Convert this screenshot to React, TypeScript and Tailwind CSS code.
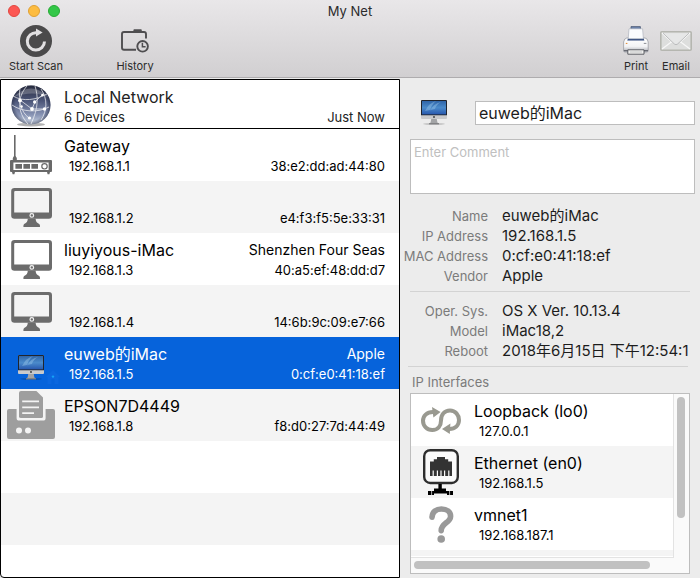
import { useState } from "react";
import type { ReactNode } from "react";
import clsx from "clsx";

type Device = {
  name: string;
  ip: string;
  vendor: string;
  mac: string;
  icon: ReactNode;
};

function ScanIcon() {
  return (
    <svg width="32" height="32" viewBox="0 0 32 32" aria-hidden>
      <circle cx="16" cy="16" r="16" fill="#4b4a4b" />
      <path d="M24.5 16.5 A8.6 8.6 0 1 1 16.5 7.8" fill="none" stroke="#e2e0e2" strokeWidth="3" />
      <path d="M16 3.6 L22.6 7.4 L16 11.6 Z" fill="#e2e0e2" />
    </svg>
  );
}

function HistoryIcon() {
  return (
    <svg width="28" height="24" viewBox="0 0 28 24" fill="none" stroke="#4f4e50" aria-hidden>
      <path d="M15 20.8 H3 Q1 20.8 1 18.8 V5 Q1 3 3 3 H23 Q25 3 25 5 V9.5" strokeWidth="1.9" />
      <path d="M11.6 4 L12.8 0.2 H20.4 L21.6 4 Z" fill="#4f4e50" stroke="none" />
      <circle cx="21.6" cy="17.3" r="5.3" strokeWidth="1.9" />
      <path d="M21.4 13.8 V17.8 H24.6" strokeWidth="1.5" />
    </svg>
  );
}

function PrintIcon() {
  return (
    <svg width="28" height="30" viewBox="0 0 28 30" aria-hidden>
      <defs>
        <linearGradient id="printBody" x1="0" y1="0" x2="0" y2="1">
          <stop offset="0" stopColor="#ffffff" />
          <stop offset="0.6" stopColor="#f3f3f5" />
          <stop offset="1" stopColor="#a9abb2" />
        </linearGradient>
      </defs>
      <path d="M9 0.6 H18.4 V4 H9 Z" fill="#6f85ad" stroke="#4a5873" strokeWidth="0.8" />
      <path d="M1.6 16 Q2.4 12 4.8 12 H23 Q25.4 12 26.2 16 V24.5 Q26.2 26 24.8 26 H3 Q1.6 26 1.6 24.5 Z" fill="url(#printBody)" stroke="#9a9ca3" strokeWidth="0.8" />
      <path d="M6.2 12.2 H21.4 L22.4 14.6 H5.2 Z" fill="#2b4378" />
      <path d="M7 2.8 H20.6 L21.4 12.8 H6.2 Z" fill="#fafbfd" stroke="#a4a9b5" strokeWidth="0.6" />
      <path d="M3.8 17.4 H5.4" stroke="#e0862d" strokeWidth="1" />
      <path d="M21.8 17.4 H24.4" stroke="#8b8d93" strokeWidth="1" />
      <path d="M1.8 24.6 H26" stroke="#696b73" strokeWidth="1.2" />
      <path d="M5.8 23.8 H22 V28.2 H5.8 Z" fill="#f0f0ef" stroke="#4f5158" strokeWidth="0.9" />
      <path d="M8 26 H20" stroke="#b9babd" strokeWidth="0.8" />
    </svg>
  );
}

function EmailIcon() {
  return (
    <svg width="32" height="20" viewBox="0 0 32 20" aria-hidden>
      <rect x="0.8" y="0.8" width="30.4" height="18.4" rx="1" fill="#dddedd" stroke="#b5b6b0" strokeWidth="1.6" />
      <path d="M2 2 L12.5 11.5 M30 2 L19.5 11.5 M2 18 L12 10.5 M30 18 L20 10.5" stroke="#f7f7f7" strokeWidth="1.2" />
      <path d="M3 2.2 L14.4 13 Q16 14.4 17.6 13 L29 2.2" fill="#e6e7e7" stroke="#aeb0b1" strokeWidth="0.8" />
    </svg>
  );
}

function GlobeIcon() {
  return (
    <svg width="40" height="42" viewBox="0 0 40 42" aria-hidden>
      <defs>
        <linearGradient id="globe" x1="0" y1="0" x2="0" y2="1">
          <stop offset="0" stopColor="#2b2f42" />
          <stop offset="0.4" stopColor="#4c5679" />
          <stop offset="0.75" stopColor="#8894b4" />
          <stop offset="1" stopColor="#ccd5e3" />
        </linearGradient>
        <radialGradient id="globeEdge">
          <stop offset="0.8" stopColor="#20263c" stopOpacity="0" />
          <stop offset="1" stopColor="#20263c" stopOpacity="0.5" />
        </radialGradient>
      </defs>
      <ellipse cx="20" cy="39.6" rx="14" ry="1.8" fill="#000" opacity="0.3" />
      <circle cx="20" cy="20" r="19.5" fill="url(#globe)" />
      <circle cx="20" cy="20" r="19.5" fill="url(#globeEdge)" />
      <path d="M2.5 12 Q20 -5 37.5 12 Q22 5 2.5 12Z" fill="#fff" opacity="0.22" />
      <g fill="none" stroke="#fff" strokeWidth="0.9" opacity="0.75">
        <path d="M16 1 C6 12 6 27 17 39" />
        <path d="M9 3 C7 16 10 27 18 33" />
        <path d="M24 1 C27 11 28 22 20 39" />
        <path d="M30 4 C37 14 36 26 30 35" />
        <path d="M2 11 C12 17 25 15 36 9" />
        <path d="M1 20 C11 27 27 28 38 22" />
        <path d="M9 15 L21 24 L33 24" />
        <path d="M21 24 L24 17 L31 10" />
      </g>
      <g fill="#fff">
        <circle cx="9" cy="15.5" r="1.9" />
        <circle cx="23.7" cy="17" r="1.7" />
        <circle cx="31.5" cy="10" r="1.3" />
        <circle cx="21" cy="24" r="1.9" />
        <circle cx="33.5" cy="24" r="1.7" />
        <circle cx="18.5" cy="33" r="1.6" />
        <circle cx="10.5" cy="21.5" r="1.3" />
      </g>
    </svg>
  );
}

function RouterIcon() {
  return (
    <svg width="42" height="40" viewBox="0 0 42 40" fill="#696969" aria-hidden>
      <path d="M4 0 H5.6 V21 L6.8 23 V26 H2.8 V23 L4 21 Z" />
      <path fillRule="evenodd" d="M1 25 H41 Q42 25 42 26 V36 Q42 37 41 37 H1 Q0 37 0 36 V26 Q0 25 1 25 Z M3.4 27.6 V35 H38.6 V27.6 Z" />
      <path d="M5.4 29 H12 V33.8 H5.4 Z M13.4 29 H20 V33.8 H13.4 Z M21.4 29 H28 V33.8 H21.4 Z M2 37 H5 L4.4 39.2 H2.6 Z M37 37 H40 L39.4 39.2 H37.6 Z" />
      <circle cx="34.5" cy="31.3" r="2.7" fill="#fff" stroke="#696969" strokeWidth="1.2" />
    </svg>
  );
}

function MonitorIcon() {
  return (
    <svg width="42" height="40" viewBox="-1 0 42 40" fill="#6c6c6c" aria-hidden>
      <path fillRule="evenodd" d="M3.5 1 H37.8 Q41 1 41 4.2 V28.6 Q41 31.8 37.8 31.8 H3.5 Q0.2 31.8 0.2 28.6 V4.2 Q0.2 1 3.5 1 Z M4.2 4 Q3.2 4 3.2 5 V25.4 H38 V5 Q38 4 37 4 Z" />
      <path d="M16.8 31.5 H24.6 Q24.6 35.5 28.2 37 Q29.2 37.6 29 40 H12.4 Q12.2 37.6 13.2 37 Q16.8 35.5 16.8 31.5 Z" />
      <circle cx="20.8" cy="28.4" r="1.8" fill="none" stroke="#f4f4f4" strokeWidth="1.2" />
    </svg>
  );
}

function ColorMacIcon() {
  return (
    <svg className="shrink-0" width="26" height="25" viewBox="0 0 26 25" aria-hidden>
      <defs>
        <linearGradient id="macScreen" x1="0" y1="0" x2="0" y2="1">
          <stop offset="0" stopColor="#2f65a8" />
          <stop offset="0.5" stopColor="#4b8bcb" />
          <stop offset="1" stopColor="#2858ae" />
        </linearGradient>
      </defs>
      <ellipse cx="13" cy="24" rx="11" ry="0.9" fill="#000" opacity="0.18" />
      <path d="M10.4 18 H15.6 L16.4 22.6 L18 23.4 V24.2 H8 V23.4 L9.6 22.6 Z" fill="#a3a4a6" />
      <path d="M8 23.4 H18 V24.2 H8 Z" fill="#6c6d70" />
      <rect x="0" y="0" width="26" height="19" rx="1" fill="#c9cacc" />
      <path d="M1 0 H25 Q26 0 26 1 V15.2 H0 V1 Q0 0 1 0 Z" fill="#20252e" />
      <rect x="1" y="1" width="24" height="13.4" fill="url(#macScreen)" />
      <path d="M4 11 Q8 3 15 1 Q10 5 9 11 Q12 4 20 2 Q15 5 14 9" fill="#a8d2ee" opacity="0.38" />
      <circle cx="13" cy="17" r="0.9" fill="#33363b" />
    </svg>
  );
}

function PrinterDeviceIcon() {
  return (
    <svg width="48" height="48" viewBox="0 0 48 48" fill="#9e9e9e" aria-hidden>
      <path d="M2 18 H9.6 V27 Q9.6 29.6 12.2 29.6 H36 Q38.6 29.6 38.6 27 V18 H46 Q48 18 48 20 V46 Q48 48 46 48 H2 Q0 48 0 46 V20 Q0 18 2 18 Z" />
      <path d="M14 0 H29.4 L36 6.6 V25.4 Q36 27 34.4 27 H14 Q12 27 12 25.4 V2 Q12 0 14 0 Z" />
      <path d="M15.2 10.4 H32 M15.2 16.4 H32 M15.2 22.2 H27" stroke="#f4f4f4" strokeWidth="1.8" />
      <circle cx="12" cy="39.4" r="3" fill="#f4f4f4" />
      <circle cx="21" cy="39.4" r="3" fill="#f4f4f4" />
    </svg>
  );
}

function LoopbackIcon() {
  return (
    <svg width="40" height="27" viewBox="0 0 40 27" aria-hidden>
      <path d="M12 5 C5.6 5 2 9 2 13.8 C2 19 6 23 11.2 23 C17 23 20 19 20 13.4 C20 7.6 23.4 3.4 29 3.4 C34.4 3.4 38 8 38 13 C38 18.4 34 22 28.4 22" fill="none" stroke="#999990" strokeWidth="4" />
      <path d="M11 0 L19.6 5 L12.4 10.4 Z M29.4 16.6 L21 22 L28.8 27 Z" fill="#999990" />
    </svg>
  );
}

function EthernetIcon() {
  return (
    <svg width="36" height="46" viewBox="0 0 36 46" aria-hidden>
      <rect x="1.2" y="1.2" width="33.6" height="32.8" rx="6" fill="#fafafa" stroke="#2d2d2d" strokeWidth="2.4" />
      <path d="M7 12.6 H10.8 V10.2 H14 V8 H22 V10.2 H25.2 V12.6 H29 V27 H26.4 V21.6 H25.2 V27 H22.2 V21.6 H21 V27 H18.6 V21.6 H17.4 V27 H15 V21.6 H13.8 V27 H10.8 V21.6 H9.6 V27 H7 Z" fill="#333" />
      <path d="M15.4 35 H18.8 V39.4 H23 V42 H30 V46 H24 V44.6 H11 V46 H5 V42 H11 V39.4 H15.4 Z" fill="#000" />
      <path d="M8.6 42 V46 M26.6 42 V46" stroke="#f4f4f4" strokeWidth="0.7" />
    </svg>
  );
}

function UnknownIcon() {
  return (
    <svg width="25" height="37" viewBox="0 0 25 37" aria-hidden>
      <path d="M3 11.2 C3.4 5.6 7.4 3 12.4 3 C17.8 3 21.6 5.8 21.6 10.2 C21.6 16.8 12.2 17 12.2 24.6" fill="none" stroke="#999" strokeWidth="5.6" strokeLinecap="round" />
      <circle cx="12.2" cy="33" r="3.8" fill="#999" />
    </svg>
  );
}

function HomeBadge() {
  return (
    <svg className="absolute right-0 bottom-1" width="16" height="16" viewBox="0 0 16 16" aria-hidden>
      <path d="M8 1 L15 8 H13.5 V15 H9.5 V10 H6.5 V15 H2.5 V8 H1 Z" fill="#0b67df" />
      <circle cx="8" cy="7.6" r="1.2" fill="#16a3f5" />
    </svg>
  );
}

const devices: Device[] = [
  { name: "Gateway", ip: "192.168.1.1", vendor: "", mac: "38:e2:dd:ad:44:80", icon: <RouterIcon /> },
  { name: "", ip: "192.168.1.2", vendor: "", mac: "e4:f3:f5:5e:33:31", icon: <MonitorIcon /> },
  { name: "liuyiyous-iMac", ip: "192.168.1.3", vendor: "Shenzhen Four Seas", mac: "40:a5:ef:48:dd:d7", icon: <MonitorIcon /> },
  { name: "", ip: "192.168.1.4", vendor: "", mac: "14:6b:9c:09:e7:66", icon: <MonitorIcon /> },
  { name: "euweb的iMac", ip: "192.168.1.5", vendor: "Apple", mac: "0:cf:e0:41:18:ef", icon: <div className="mt-2"><ColorMacIcon /></div> },
  { name: "EPSON7D4449", ip: "192.168.1.8", vendor: "", mac: "f8:d0:27:7d:44:49", icon: <PrinterDeviceIcon /> },
];

const identity = [
  ["Name", "euweb的iMac"],
  ["IP Address", "192.168.1.5"],
  ["MAC Address", "0:cf:e0:41:18:ef"],
  ["Vendor", "Apple"],
];

const system = [
  ["Oper. Sys.", "OS X Ver. 10.13.4"],
  ["Model", "iMac18,2"],
  ["Reboot", "2018年6月15日 下午12:54:1"],
];

const interfaces = [
  { name: "Loopback (lo0)", ip: "127.0.0.1", icon: <LoopbackIcon /> },
  { name: "Ethernet (en0)", ip: "192.168.1.5", icon: <EthernetIcon /> },
  { name: "vmnet1", ip: "192.168.187.1", icon: <UnknownIcon /> },
];

function ToolButton({ label, icon, className }: { label: string; icon: ReactNode; className: string }) {
  return (
    <button className={clsx("flex flex-col items-center", className)}>
      <span className="flex h-8 items-center justify-center">{icon}</span>
      <span className="mt-px text-[11px] leading-4 whitespace-nowrap">{label}</span>
    </button>
  );
}

function DeviceRow({ device, index, active, onSelect }: { device: Device; index: number; active: boolean; onSelect: () => void }) {
  return (
    <li>
      <button
        onClick={onSelect}
        className={clsx(
          "flex h-[52px] w-full pr-3.5 text-left",
          active ? "bg-[#0663db] text-white" : index % 2 ? "bg-[#f4f4f4]" : "bg-white"
        )}
      >
        <span className="relative flex h-full w-[60px] shrink-0 items-center justify-center">
          {device.icon}
          {active && <HomeBadge />}
        </span>
        <span className="min-w-0 flex-1 pt-[7px] pl-[3px]">
          <span className="block h-5 text-base leading-5 whitespace-nowrap">{device.name}</span>
          <span className="block pl-[5px] text-[13px] leading-5">{device.ip}</span>
        </span>
        <span className="shrink-0 pt-[7px] text-right whitespace-nowrap">
          <span className="block h-5 text-sm leading-5">{device.vendor}</span>
          <span className="block text-[13px] leading-5">{device.mac}</span>
        </span>
      </button>
    </li>
  );
}

function Facts({ rows }: { rows: string[][] }) {
  return (
    <dl className="grid grid-cols-[88px_1fr] gap-x-3.5 overflow-hidden pr-2 leading-5 whitespace-nowrap">
      {rows.map(([label, value]) => (
        <div key={label} className="contents">
          <dt className="text-right text-[13px] text-[#7b7b7b]">{label}</dt>
          <dd className="overflow-hidden text-[15px] text-[#1c1c1c]">{value}</dd>
        </div>
      ))}
    </dl>
  );
}

export default function App() {
  const [selected, setSelected] = useState(4);

  return (
    <div className="flex min-h-screen flex-col overflow-hidden bg-[#ececec] font-['Inter','Noto_Sans_CJK_SC',sans-serif] text-black">
      <header className="border-b border-[#aeacae] bg-linear-to-b from-[#e9e7e9] to-[#d1cfd1] text-[#2b2b2b]">
        <div className="grid h-6 grid-cols-[1fr_auto_1fr] items-center pb-0.5">
          <div className="flex gap-2 pl-2">
            <button aria-label="Close" className="size-3 rounded-full border border-[#e2463f] bg-[#fc5753]" />
            <button aria-label="Minimize" className="size-3 rounded-full border border-[#e0a033] bg-[#fdbc40]" />
            <button aria-label="Zoom" className="size-3 rounded-full border border-[#27aa35] bg-[#33c748]" />
          </div>
          <h1 className="text-[13px] leading-5">My Net</h1>
        </div>
        <div className="flex pt-px pr-1 pb-[3px]">
          <ToolButton label="Start Scan" icon={<ScanIcon />} className="w-[72px]" />
          <ToolButton label="History" icon={<HistoryIcon />} className="ml-[27px] w-[72px]" />
          <ToolButton label="Print" icon={<PrintIcon />} className="ml-auto w-10" />
          <ToolButton label="Email" icon={<EmailIcon />} className="w-10" />
        </div>
      </header>

      <main className="grid flex-1 grid-cols-[4fr_3fr] pt-px">
        <section className="flex min-w-0 flex-col overflow-hidden rounded-bl-sm border border-black bg-white">
          <div className="flex border-b border-black pr-3.5 text-[#222]">
            <span className="flex w-[60px] shrink-0 items-center justify-center pt-1">
              <GlobeIcon />
            </span>
            <div className="flex-1 pt-[7px] pb-px pl-[3px]">
              <h2 className="text-base leading-5">Local Network</h2>
              <div className="flex justify-between text-[13px] leading-5">
                <span>6 Devices</span>
                <span>Just Now</span>
              </div>
            </div>
          </div>
          <ul>
            {devices.map((d, i) => (
              <DeviceRow key={d.ip} device={d} index={i} active={i === selected} onSelect={() => setSelected(i)} />
            ))}
          </ul>
          <div className="h-[52px]" />
          <div className="h-[52px] bg-[#f4f4f4]" />
        </section>

        <aside className="flex min-w-0 flex-col pb-1">
          <div className="flex items-center pt-[21px] pr-[5px] pl-[21px]">
            <ColorMacIcon />
            <input
              aria-label="Device name"
              defaultValue="euweb的iMac"
              className="ml-7 h-6 min-w-0 flex-1 border border-[#bdbdbd] bg-white px-[3px] text-base text-[#1c1c1c] outline-none"
            />
          </div>
          <textarea
            aria-label="Comment"
            placeholder="Enter Comment"
            className="mt-3.5 mr-[5px] ml-2.5 h-[55px] resize-none border border-[#bdbdbd] bg-white px-[3px] py-0.5 text-[13px] leading-5 outline-none placeholder:text-[#c0c0c0]"
          />

          <div className="mt-3">
            <Facts rows={identity} />
          </div>
          <hr className="mt-[5px] mr-2.5 ml-2.5 border-[#d3d3d3]" />
          <div className="mt-[9px]">
            <Facts rows={system} />
          </div>
          <hr className="mt-[5px] mr-3 ml-2 border-[#d3d3d3]" />

          <h3 className="mt-[5px] ml-3 text-[13px] leading-5 text-[#7b7b7b]">IP Interfaces</h3>
          <div className="mt-px mr-2.5 ml-2.5 grid flex-1 grid-cols-[1fr_15px] grid-rows-[1fr_15px] border border-[#bdbdbd] bg-[#fafafa]">
            <div className="overflow-hidden border-r border-b border-[#e3e3e3] bg-white">
              <ul>
                {interfaces.map((item, i) => (
                  <li key={item.name} className={clsx("flex h-[52px]", i % 2 ? "bg-[#f4f4f4]" : "bg-white")}>
                    <span className="flex w-[60px] shrink-0 items-center justify-center">{item.icon}</span>
                    <span className="pt-[7px] pl-[3px] whitespace-nowrap">
                      <span className="block text-base leading-5">{item.name}</span>
                      <span className="block pl-[5px] text-[13px] leading-5">{item.ip}</span>
                    </span>
                  </li>
                ))}
              </ul>
              <div className="h-1.5 bg-[#f4f4f4]" />
            </div>
            <div className="px-[3px] pt-[3px]">
              <div className="h-3/4 w-2 rounded-full bg-[#c1c1c1]" />
            </div>
            <div className="px-[3px] pt-[3px]">
              <div className="h-2 w-11/12 rounded-full bg-[#c1c1c1]" />
            </div>
          </div>
        </aside>
      </main>
    </div>
  );
}
